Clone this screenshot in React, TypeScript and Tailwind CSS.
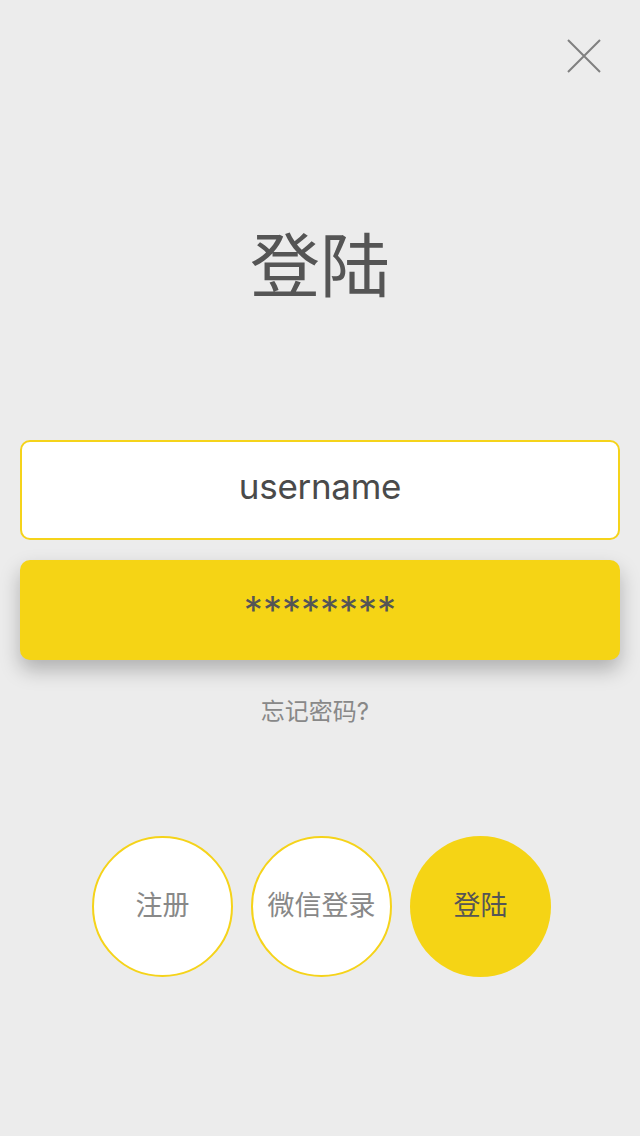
import React from 'react'

const font = { fontFamily: 'Inter, "Noto Sans CJK SC", sans-serif' }

function CircleButton({ label, filled }: { label: string; filled?: boolean }) {
  return (
    <button
      className={
        filled
          ? 'w-[141px] h-[141px] rounded-full bg-[#f5d415] flex items-center justify-center text-[27px] text-[#555555]'
          : 'w-[141px] h-[141px] rounded-full bg-white border-2 border-[#f5d31a] flex items-center justify-center text-[27px] text-[#888888]'
      }
    >
      {label}
    </button>
  )
}

export default function App() {
  return (
    <div className="min-h-[1136px] w-full bg-[#ececec] flex flex-col items-center" style={font}>
      <div className="w-full h-[232px] flex justify-end items-start pt-[38px] pr-[38px]">
        <button aria-label="close" className="w-[36px] h-[36px]">
          <svg width="36" height="36" viewBox="0 0 36 36">
            <path d="M2 2 L34 34 M34 2 L2 34" stroke="#808080" strokeWidth="2" fill="none" />
          </svg>
        </button>
      </div>

      <h1 className="h-[70px] text-[70px] leading-none text-[#555555] font-normal">登陆</h1>

      <div className="w-full px-5 mt-[138px] flex flex-col">
        <div className="h-[100px] rounded-[10px] bg-white border-2 border-[#f5d31a] flex items-center justify-center pb-[8px] text-[35px] tracking-[-0.3px] text-[#4a4a4a]">
          username
        </div>
        <div className="mt-5 h-[100px] rounded-[10px] bg-[#f5d415] shadow-[0_10px_20px_rgba(0,0,0,0.25)] flex items-center justify-center text-[38px] text-[#555555]">
          ********
        </div>
      </div>

      <p className="mt-[40px] mr-[10px] text-[24px] leading-[24px] text-[#888888]">忘记密码?</p>

      <div className="mt-[112px] ml-[3px] flex gap-[18px]">
        <CircleButton label="注册" />
        <CircleButton label="微信登录" />
        <CircleButton label="登陆" filled />
      </div>
    </div>
  )
}
